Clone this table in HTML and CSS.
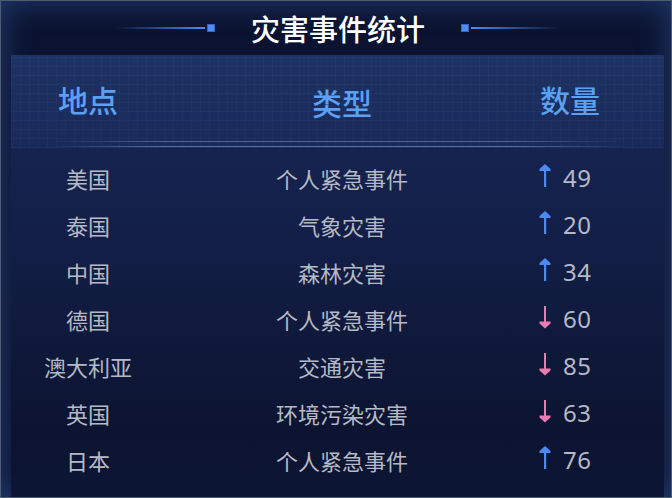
FILE: index.html
```html
<!DOCTYPE html>
<html lang="zh">
<head>
<meta charset="utf-8">
<link rel="stylesheet" href="styles.css">
</head>
<body>
<div class="frame">
  <div class="title">
    <span class="deco deco-left"><i class="line"></i><i class="sq"></i></span>
    <h1>灾害事件统计</h1>
    <span class="deco deco-right"><i class="sq"></i><i class="line"></i></span>
  </div>
  <div class="table">
    <div class="thead">
      <div class="th">地点</div>
      <div class="th th-mid">类型</div>
      <div class="th">数量</div>
      <div class="sep"></div>
    </div>
    <div class="tbody">
      <div class="row"><div class="td">美国</div><div class="td">个人紧急事件</div><div class="td num"><svg class="arrow up" viewBox="0 0 14 24"><polygon points="7,0 12.5,5 12.5,7 1.5,7 1.5,5"/><rect x="6" y="6" width="2.2" height="17"/></svg><span>49</span></div></div>
      <div class="row"><div class="td">泰国</div><div class="td">气象灾害</div><div class="td num"><svg class="arrow up" viewBox="0 0 14 24"><polygon points="7,0 12.5,5 12.5,7 1.5,7 1.5,5"/><rect x="6" y="6" width="2.2" height="17"/></svg><span>20</span></div></div>
      <div class="row"><div class="td">中国</div><div class="td">森林灾害</div><div class="td num"><svg class="arrow up" viewBox="0 0 14 24"><polygon points="7,0 12.5,5 12.5,7 1.5,7 1.5,5"/><rect x="6" y="6" width="2.2" height="17"/></svg><span>34</span></div></div>
      <div class="row"><div class="td">德国</div><div class="td">个人紧急事件</div><div class="td num"><svg class="arrow down" viewBox="0 0 14 24"><rect x="6" y="1" width="2" height="17"/><polygon points="1.5,16.5 12.5,16.5 12.5,18.5 7,23.5 1.5,18.5"/></svg><span>60</span></div></div>
      <div class="row"><div class="td">澳大利亚</div><div class="td">交通灾害</div><div class="td num"><svg class="arrow down" viewBox="0 0 14 24"><rect x="6" y="1" width="2" height="17"/><polygon points="1.5,16.5 12.5,16.5 12.5,18.5 7,23.5 1.5,18.5"/></svg><span>85</span></div></div>
      <div class="row"><div class="td">英国</div><div class="td">环境污染灾害</div><div class="td num"><svg class="arrow down" viewBox="0 0 14 24"><rect x="6" y="1" width="2" height="17"/><polygon points="1.5,16.5 12.5,16.5 12.5,18.5 7,23.5 1.5,18.5"/></svg><span>63</span></div></div>
      <div class="row"><div class="td">日本</div><div class="td">个人紧急事件</div><div class="td num"><svg class="arrow up" viewBox="0 0 14 24"><polygon points="7,0 12.5,5 12.5,7 1.5,7 1.5,5"/><rect x="6" y="6" width="2.2" height="17"/></svg><span>76</span></div></div>
    </div>
  </div>
</div>
</body>
</html>
```

FILE: styles.css
```css
* { box-sizing: border-box; margin: 0; padding: 0; }
html, body { width: 672px; height: 498px; overflow: hidden; background: #0b1330; }
body { font-family: "Noto Sans CJK SC", "Noto Sans", sans-serif; }

.frame {
  width: 672px;
  height: 498px;
  border: 1px solid #4d5d74;
  background: #0b1330;
  box-shadow: inset 0 0 28px 4px rgba(38, 66, 122, 0.75);
  display: flex;
  flex-direction: column;
}

.title {
  height: 54px;
  display: flex;
  align-items: center;
  justify-content: center;
  gap: 36px;
  padding-left: 4px;
}
.title h1 {
  font-size: 29px;
  font-weight: 500;
  color: #ffffff;
  line-height: 1;
  letter-spacing: 0;
  margin-top: 1px;
}
.deco { display: flex; align-items: center; gap: 2px; }
.deco .line {
  display: block;
  width: 89px;
  height: 2px;
}
.deco-left .line { background: linear-gradient(90deg, rgba(74,140,240,0), #4a8cf0); }
.deco-right .line { background: linear-gradient(90deg, #4a8cf0, rgba(74,140,240,0)); }
.deco .sq {
  display: block;
  width: 8px;
  height: 8px;
  background: #4d8ff5;
  border: 1px solid #3366c0;
}

.table {
  margin: 0 7px 0 10px;
  flex: 1;
  background: linear-gradient(180deg, #182856 0%, #131f48 40%, #0c1431 85%, #0c1533 100%);
  display: flex;
  flex-direction: column;
}

.thead {
  position: relative;
  height: 93px;
  display: grid;
  grid-template-columns: 154px 354px 102px;
  align-items: center;
  background-color: #1c3161;
  background-image:
    repeating-linear-gradient(90deg, rgba(255,255,255,0.025) 0 1px, transparent 1px 9px),
    repeating-linear-gradient(0deg, rgba(255,255,255,0.025) 0 1px, transparent 1px 9px),
    linear-gradient(180deg, #1d3363, #19295a);
}
.th {
  text-align: center;
  font-size: 30px;
  font-weight: 500;
  color: #5ba0f2;
  line-height: 1;
  padding-bottom: 5px;
}
.th-mid { padding-top: 1px; padding-bottom: 0; }

.sep {
  position: absolute;
  left: 40px;
  right: 40px;
  bottom: 1px;
  height: 6px;
  background:
    linear-gradient(90deg, rgba(150,170,210,0), rgba(150,170,210,0.45) 20%, rgba(150,170,210,0.45) 80%, rgba(150,170,210,0)) top / 100% 1px no-repeat,
    linear-gradient(90deg, rgba(150,170,210,0), rgba(150,170,210,0.55) 20%, rgba(150,170,210,0.55) 80%, rgba(150,170,210,0)) bottom / 100% 1px no-repeat;
}

.tbody { padding-top: 7px; }
.row {
  height: 46.9px;
  display: grid;
  grid-template-columns: 154px 354px 102px;
  align-items: center;
}
.td {
  text-align: center;
  font-size: 22px;
  color: #b5b9c5;
  line-height: 1;
}
.num {
  display: flex;
  align-items: center;
  justify-content: flex-start;
  padding-left: 19px;
  gap: 11px;
}
.num span {
  font-family: "Noto Sans", "Open Sans", sans-serif;
  font-size: 24px;
  letter-spacing: 0.5px;
}
.arrow { width: 14px; height: 24px; display: block; }
.arrow.up { fill: #4a8af2; margin-top: -4px; }
.arrow.down { fill: #e97ab4; margin-top: -4px; }
```
